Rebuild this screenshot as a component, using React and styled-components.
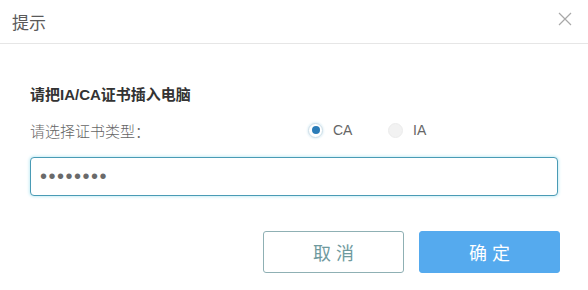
import React, { useState } from "react";
import styled, { createGlobalStyle } from "styled-components";

const GlobalStyle = createGlobalStyle`
  html, body {
    margin: 0;
    padding: 0;
    background: #ffffff;
  }
  body {
    font-family: "Liberation Sans", "Noto Sans CJK SC", sans-serif;
  }
`;

const App = () => {
  const [type, setType] = useState("CA");

  return (
    <Wrapper>
      <GlobalStyle />
      <Header>
        <Title>提示</Title>
        <Close aria-label="close">
          <svg width="14" height="14" viewBox="0 0 14 14">
            <path d="M1 1 L13 13 M13 1 L1 13" stroke="#a8a8a8" strokeWidth="1.2" fill="none" />
          </svg>
        </Close>
      </Header>
      <Body>
        <Heading>请把IA/CA证书插入电脑</Heading>
        <TypeRow>
          <Label>请选择证书类型：</Label>
          <Radios>
            <RadioItem onClick={() => setType("CA")}>
              <RadioDot $checked={type === "CA"} />
              CA
            </RadioItem>
            <RadioItem onClick={() => setType("IA")}>
              <RadioDot $checked={type === "IA"} />
              IA
            </RadioItem>
          </Radios>
        </TypeRow>
        <Input type="password" defaultValue="12345678" />
        <Buttons>
          <Button>取 消</Button>
          <Button $primary>确 定</Button>
        </Buttons>
      </Body>
    </Wrapper>
  );
};

export default App;

const Wrapper = styled.div`
  width: 588px;
  height: 290px;
  background: #fff;
  display: flex;
  flex-direction: column;
  overflow: hidden;
`;

const Header = styled.div`
  height: 43px;
  display: flex;
  align-items: center;
  justify-content: space-between;
  padding: 0 16px 0 12px;
  border-bottom: 1px solid #e6e6e6;
  box-sizing: content-box;
`;

const Title = styled.div`
  font-size: 17px;
  color: #5a5a5a;
  margin-top: -1px;
`;

const Close = styled.div`
  width: 14px;
  height: 14px;
  display: flex;
  cursor: pointer;
  margin-top: -6px;
`;

const Body = styled.div`
  display: flex;
  flex-direction: column;
  padding: 0 30px 0 30px;
`;

const Heading = styled.div`
  margin-top: 41px;
  font-size: 15px;
  font-weight: 700;
  color: #333;
  line-height: 20px;
`;

const TypeRow = styled.div`
  display: flex;
  align-items: center;
  margin-top: 15px;
  height: 20px;
`;

const Label = styled.div`
  width: 278px;
  font-family: "Noto Sans CJK SC", sans-serif;
  font-size: 15px;
  font-weight: 300;
  color: #666;
`;

const Radios = styled.div`
  display: flex;
  align-items: center;
  gap: 22px;
`;

const RadioItem = styled.label`
  display: flex;
  align-items: center;
  gap: 10px;
  font-size: 14px;
  color: #666;
  cursor: pointer;
  width: 58px;
`;

const RadioDot = styled.span`
  width: 15px;
  height: 15px;
  border-radius: 50%;
  box-sizing: border-box;
  border: 1px solid ${(p) => (p.$checked ? "#cfdfe8" : "#ececec")};
  background: ${(p) => (p.$checked ? "#fff" : "#f2f2f2")};
  box-shadow: ${(p) => (p.$checked ? "0 0 2px 1px #e4f1f7" : "none")};
  display: flex;
  align-items: center;
  justify-content: center;

  &::after {
    content: "";
    width: 8px;
    height: 8px;
    border-radius: 50%;
    background: ${(p) => (p.$checked ? "#2b7cb8" : "transparent")};
  }
`;

const Input = styled.input`
  margin-top: 17px;
  width: 528px;
  height: 39px;
  box-sizing: border-box;
  border: 1px solid #4a9bb5;
  border-radius: 4px;
  box-shadow: 0 0 3px 1px #c9eef6;
  padding: 0 9px;
  font-size: 20px;
  letter-spacing: 1.5px;
  color: #6a6a6a;
  outline: none;
  font-family: "Liberation Sans", sans-serif;
`;

const Buttons = styled.div`
  display: flex;
  justify-content: flex-end;
  gap: 15px;
  margin-top: 35px;
  margin-right: -2px;
`;

const Button = styled.button`
  width: 141px;
  height: 42px;
  box-sizing: border-box;
  border-radius: 3px;
  font-family: "Liberation Sans", "Noto Sans CJK SC", sans-serif;
  font-size: 18px;
  cursor: pointer;
  border: 1px solid ${(p) => (p.$primary ? "#55aaee" : "#8fb0b4")};
  background: ${(p) => (p.$primary ? "#55aaee" : "#fff")};
  color: ${(p) => (p.$primary ? "#fff" : "#6f9a9e")};
`;
